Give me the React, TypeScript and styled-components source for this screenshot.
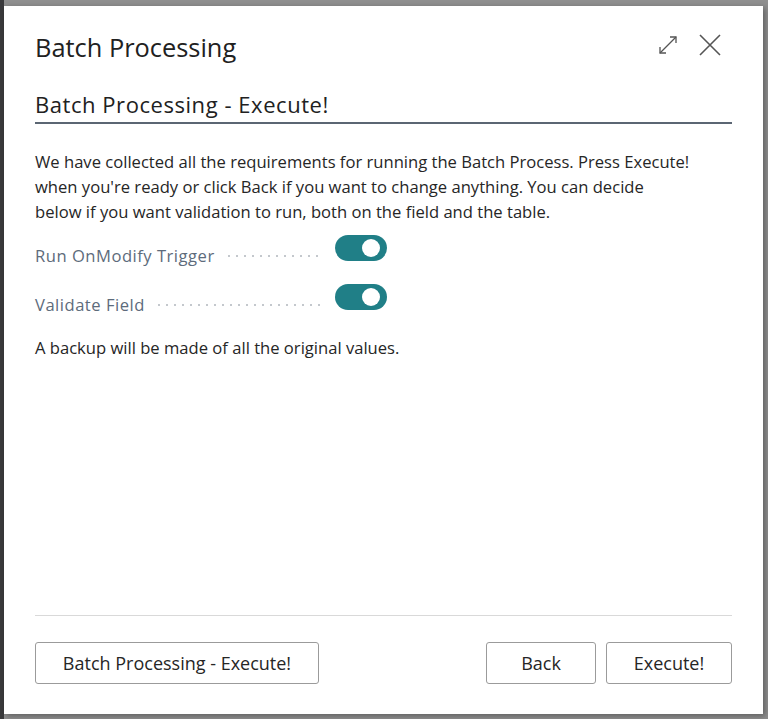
import React from "react";
import styled, { createGlobalStyle } from "styled-components";

const Global = createGlobalStyle`
  html, body { margin: 0; padding: 0; }
  body {
    width: 768px;
    height: 719px;
    overflow: hidden;
    background: #8e8e8e;
    font-family: "Open Sans", "Noto Sans", sans-serif;
  }
`;

const Backdrop = styled.div`
  width: 768px;
  height: 719px;
  box-sizing: border-box;
  padding: 6px 5px 5px 4px;
  background: linear-gradient(to right, #3a3a3c 0 4px, #8f8f8f 4px);
`;

const Dialog = styled.div`
  width: 759px;
  height: 708px;
  box-sizing: border-box;
  background: #fff;
  box-shadow: 2px 2px 6px rgba(0, 0, 0, 0.35);
  padding: 0 31px 0 31px;
  display: flex;
  flex-direction: column;
  color: #212121;
`;

const Header = styled.div`
  display: flex;
  align-items: center;
  justify-content: space-between;
  height: 83px;
  padding-bottom: 1px;
  box-sizing: border-box;
`;

const Title = styled.h1`
  margin: 0;
  font-size: 25.4px;
  font-weight: 400;
  color: #212121;
`;

const Icons = styled.div`
  display: flex;
  gap: 21px;
  align-items: center;
  margin-right: 11px;
  margin-top: -5px;
`;

const IconBtn = styled.span`
  display: inline-flex;
  color: #555;
`;

const Section = styled.h2`
  margin: 0;
  font-size: 22px;
  font-weight: 400;
  letter-spacing: 0.55px;
  padding-bottom: 3px;
  border-bottom: 2px solid #5b6673;
  line-height: 30px;
`;

const Body = styled.div`
  flex: 1;
  padding-top: 25px;
  font-size: 16.6px;
  line-height: 25px;
  color: #262626;
`;

const Para = styled.p`
  margin: 0;
`;

const Rows = styled.div`
  display: flex;
  flex-direction: column;
  gap: 23px;
  margin-top: 11px;
  margin-bottom: 25px;
`;

const Row = styled.div`
  display: flex;
  align-items: center;
  width: 352px;
  height: 26px;
`;

const Label = styled.span`
  color: #5d6b7b;
  white-space: nowrap;
  letter-spacing: 0.5px;
  position: relative;
  top: 7px;
`;

const Dots = styled.span`
  flex: 1;
  margin: 0 12px 0 10px;
  height: 2px;
  position: relative;
  top: 8px;
  background-image: radial-gradient(circle, #c4c8cd 0.8px, transparent 1.1px);
  background-size: 8px 2px;
  background-repeat: repeat-x;
`;

const Toggle = styled.span<{ $on: boolean }>`
  width: 52px;
  height: 26px;
  border-radius: 13px;
  background: ${(p) => (p.$on ? "#207f87" : "#ccc")};
  display: flex;
  align-items: center;
  justify-content: ${(p) => (p.$on ? "flex-end" : "flex-start")};
  padding: 0 7px;
  box-sizing: border-box;
  &::after {
    content: "";
    width: 18px;
    height: 18px;
    border-radius: 50%;
    background: #fff;
  }
`;

const Footer = styled.div`
  border-top: 1px solid #d9d9d9;
  padding-top: 26px;
  height: 99px;
  box-sizing: border-box;
  display: flex;
  align-items: flex-start;
  gap: 10px;
`;

const Spacer = styled.div`
  flex: 1;
`;

const Button = styled.button<{ $w: number }>`
  width: ${(p) => p.$w}px;
  height: 42px;
  border: 1px solid #9b9b9b;
  border-radius: 3px;
  background: #fff;
  font-family: "Open Sans", "Noto Sans", sans-serif;
  font-size: 18px;
  color: #262626;
  padding: 0;
`;

export default function App() {
  return (
    <>
      <Global />
      <Backdrop>
        <Dialog>
          <Header>
            <Title>Batch Processing</Title>
            <Icons>
              <IconBtn>
                <svg width="20" height="20" viewBox="0 0 20 20" fill="none" stroke="currentColor" strokeWidth="1.3">
                  <path d="M2 18 L18 2" />
                  <path d="M12 2 H18 V8" />
                  <path d="M2 12 V18 H8" />
                </svg>
              </IconBtn>
              <IconBtn>
                <svg width="22" height="22" viewBox="0 0 22 22" fill="none" stroke="currentColor" strokeWidth="1.6">
                  <path d="M1 1 L21 21 M21 1 L1 21" />
                </svg>
              </IconBtn>
            </Icons>
          </Header>
          <Section>Batch Processing - Execute!</Section>
          <Body>
            <Para>
              We have collected all the requirements for running the Batch Process. Press Execute!
              <br />
              when you're ready or click Back if you want to change anything. You can decide
              <br />
              below if you want validation to run, both on the field and the table.
            </Para>
            <Rows>
              <Row>
                <Label>Run OnModify Trigger</Label>
                <Dots />
                <Toggle $on />
              </Row>
              <Row>
                <Label>Validate Field</Label>
                <Dots />
                <Toggle $on />
              </Row>
            </Rows>
            <Para>A backup will be made of all the original values.</Para>
          </Body>
          <Footer>
            <Button $w={284}>Batch Processing - Execute!</Button>
            <Spacer />
            <Button $w={110}>Back</Button>
            <Button $w={126}>Execute!</Button>
          </Footer>
        </Dialog>
      </Backdrop>
    </>
  );
}
